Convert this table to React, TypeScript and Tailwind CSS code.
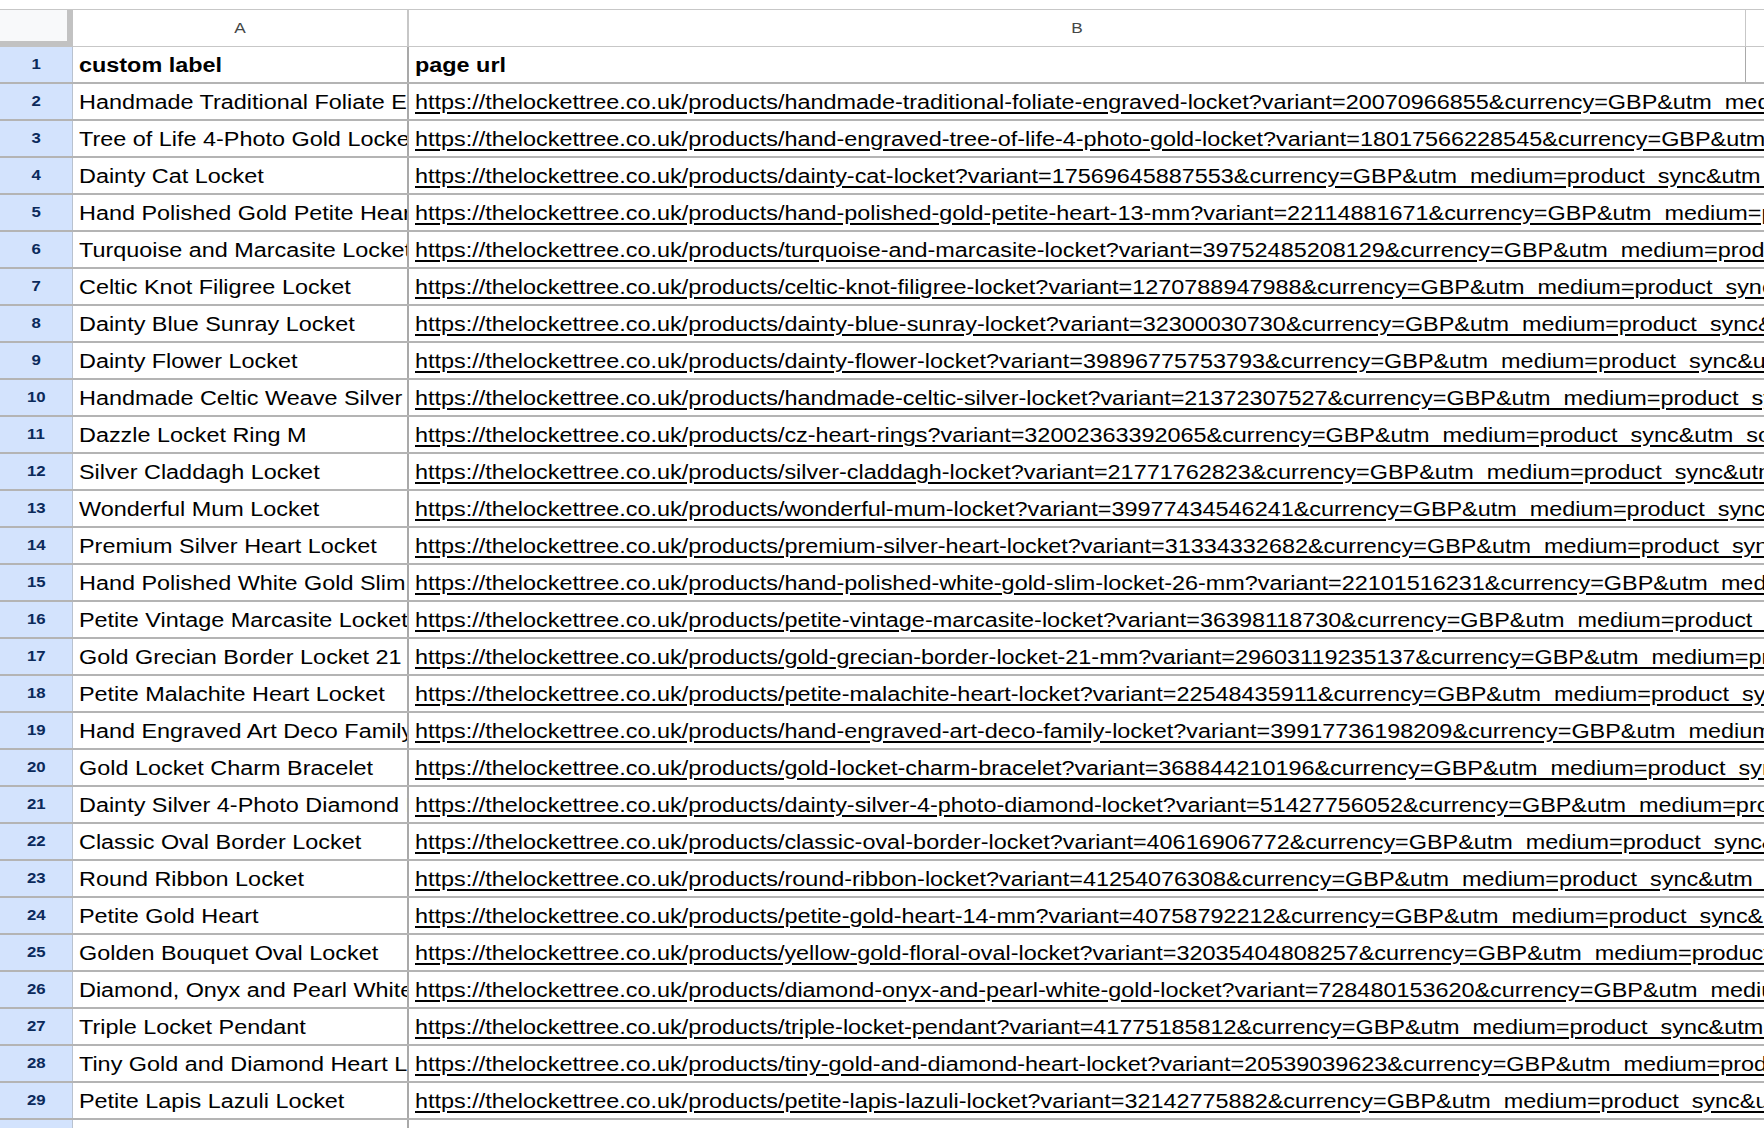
import React from 'react';

const QS = '&currency=GBP&utm_medium=product_sync&utm_source=google&utm_content=sag_organic&utm_campaign=sag_organic';
const BASE = 'https://thelockettree.co.uk/products/';

const rows: [string, string][] = [
  ['Handmade Traditional Foliate Engraved Locket', 'handmade-traditional-foliate-engraved-locket?variant=20070966855'],
  ['Tree of Life 4-Photo Gold Locket', 'hand-engraved-tree-of-life-4-photo-gold-locket?variant=18017566228545'],
  ['Dainty Cat Locket', 'dainty-cat-locket?variant=17569645887553'],
  ['Hand Polished Gold Petite Heart 13 mm', 'hand-polished-gold-petite-heart-13-mm?variant=22114881671'],
  ['Turquoise and Marcasite Locket', 'turquoise-and-marcasite-locket?variant=39752485208129'],
  ['Celtic Knot Filigree Locket', 'celtic-knot-filigree-locket?variant=1270788947988'],
  ['Dainty Blue Sunray Locket', 'dainty-blue-sunray-locket?variant=32300030730'],
  ['Dainty Flower Locket', 'dainty-flower-locket?variant=39896775753793'],
  ['Handmade Celtic Weave Silver Locket', 'handmade-celtic-silver-locket?variant=21372307527'],
  ['Dazzle Locket Ring M', 'cz-heart-rings?variant=32002363392065'],
  ['Silver Claddagh Locket', 'silver-claddagh-locket?variant=21771762823'],
  ['Wonderful Mum Locket', 'wonderful-mum-locket?variant=39977434546241'],
  ['Premium Silver Heart Locket', 'premium-silver-heart-locket?variant=31334332682'],
  ['Hand Polished White Gold Slim Locket 26 mm', 'hand-polished-white-gold-slim-locket-26-mm?variant=22101516231'],
  ['Petite Vintage Marcasite Locket', 'petite-vintage-marcasite-locket?variant=36398118730'],
  ['Gold Grecian Border Locket 21', 'gold-grecian-border-locket-21-mm?variant=29603119235137'],
  ['Petite Malachite Heart Locket', 'petite-malachite-heart-locket?variant=22548435911'],
  ['Hand Engraved Art Deco Family Locket', 'hand-engraved-art-deco-family-locket?variant=39917736198209'],
  ['Gold Locket Charm Bracelet', 'gold-locket-charm-bracelet?variant=368844210196'],
  ['Dainty Silver 4-Photo Diamond Locket', 'dainty-silver-4-photo-diamond-locket?variant=51427756052'],
  ['Classic Oval Border Locket', 'classic-oval-border-locket?variant=40616906772'],
  ['Round Ribbon Locket', 'round-ribbon-locket?variant=41254076308'],
  ['Petite Gold Heart', 'petite-gold-heart-14-mm?variant=40758792212'],
  ['Golden Bouquet Oval Locket', 'yellow-gold-floral-oval-locket?variant=32035404808257'],
  ['Diamond, Onyx and Pearl White Gold Locket', 'diamond-onyx-and-pearl-white-gold-locket?variant=728480153620'],
  ['Triple Locket Pendant', 'triple-locket-pendant?variant=41775185812'],
  ['Tiny Gold and Diamond Heart Locket', 'tiny-gold-and-diamond-heart-locket?variant=20539039623'],
  ['Petite Lapis Lazuli Locket', 'petite-lapis-lazuli-locket?variant=32142775882'],
];

// text in the capture is a little wider than it is tall, so it is stretched sideways
const cellText = 'inline-block whitespace-nowrap origin-left scale-x-[1.2] text-[19.5px] leading-[22px]';

function RowHead({ n }: { n: number }) {
  return (
    <div className="w-[73px] shrink-0 h-full flex items-center justify-center bg-[#d3e3fd] border-r border-[#b9c2cf]">
      <span className="text-[15px] font-bold text-[#0b2a5b] scale-x-[1.12]">{n}</span>
    </div>
  );
}

export default function App() {
  return (
    <div className="h-screen overflow-hidden bg-white text-black font-['Liberation_Sans',Arial,sans-serif]">
      <div className="h-[9px]" />

      {/* column headers */}
      <div className="flex h-[38px] border-t border-b border-[#c7c7c7]">
        <div className="w-[73px] shrink-0 bg-[#f8f9fa] border-r-[6px] border-b-[6px] border-[#c2c2c2] -mb-px" />
        <div className="w-[336px] shrink-0 flex items-center justify-center border-r-2 border-[#c7c7c7]">
          <span className="text-[15px] text-[#444746] scale-x-[1.15]">A</span>
        </div>
        <div className="w-[1337px] shrink-0 flex items-center justify-center border-r border-[#c7c7c7]">
          <span className="text-[15px] text-[#444746] scale-x-[1.15]">B</span>
        </div>
        <div className="flex-1" />
      </div>

      {/* header row */}
      <div className="flex h-[37px] border-b-2 border-[#b4b4b4]">
        <RowHead n={1} />
        <div className="w-[336px] shrink-0 overflow-hidden pl-[6px] flex items-center border-r-2 border-[#a9a9a9]">
          <span className={cellText + ' font-bold'}>custom label</span>
        </div>
        <div className="w-[1337px] shrink-0 overflow-hidden pl-[6px] flex items-center border-r border-[#a9a9a9]">
          <span className={cellText + ' font-bold'}>page url</span>
        </div>
        <div className="flex-1" />
      </div>

      {rows.map(([label, path], i) => (
        <div key={i} className="flex h-[37px] border-b-2 border-[#b4b4b4]">
          <RowHead n={i + 2} />
          <div className="w-[336px] shrink-0 overflow-hidden pl-[6px] flex items-center border-r-2 border-[#a9a9a9]">
            <span className={cellText}>{label}</span>
          </div>
          <div className="flex-1 min-w-0 overflow-hidden pl-[6px] flex items-center">
            <span className={cellText + ' underline decoration-2 underline-offset-[3px]'}>{BASE + path + QS}</span>
          </div>
        </div>
      ))}

      <div className="flex h-[37px]">
        <RowHead n={30} />
        <div className="w-[336px] shrink-0 border-r-2 border-[#a9a9a9]" />
        <div className="flex-1" />
      </div>
    </div>
  );
}
